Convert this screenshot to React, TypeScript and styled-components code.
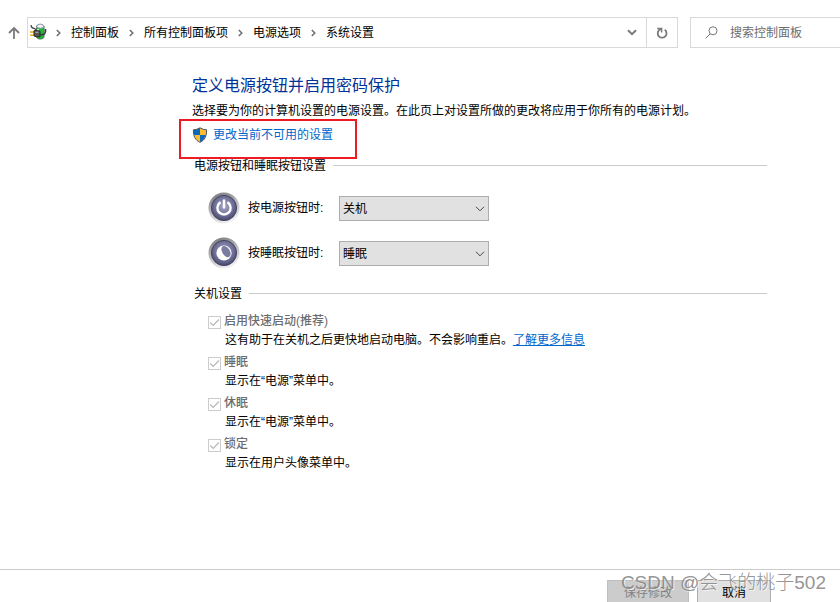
import React from "react";
import styled, { createGlobalStyle } from "styled-components";

const GlobalStyle = createGlobalStyle`
  * { box-sizing: border-box; }
  body {
    margin: 0;
    background: #fff;
    color: #000;
    font-family: "Liberation Sans", "Noto Sans CJK SC", sans-serif;
    font-size: 12px;
    line-height: 18px;
  }
  button, input, select { font: inherit; }
`;

const Page = styled.div`
  position: relative;
  display: flex;
  flex-direction: column;
  height: 100vh;
  overflow: hidden;
`;

const TopBar = styled.header`
  display: flex;
  align-items: stretch;
  height: 31px;
  margin-top: 17px;
`;

const PlainButton = styled.button`
  display: flex;
  align-items: center;
  justify-content: center;
  padding: 0;
  border: 0;
  background: none;
  color: #7a7a7a;
`;

const UpButton = styled(PlainButton)`
  width: 27px;
`;

const AddressBar = styled.div`
  display: flex;
  flex: 1;
  border: 1px solid #d9d9d9;
`;

const Crumbs = styled.nav`
  display: flex;
  flex: 1;
  align-items: center;
  padding-left: 1px;
  white-space: nowrap;
`;

const Crumb = styled.a`
  color: #000;
  text-decoration: none;
`;

const CrumbArrow = styled.svg`
  width: 5px;
  height: 8px;
  margin: 0 10px;
  &:first-of-type { margin-left: 8px; }
`;

const HistoryButton = styled(PlainButton)`
  width: 28px;
`;

const RefreshButton = styled(PlainButton)`
  width: 31px;
  border-left: 1px solid #d9d9d9;
`;

const SearchBox = styled.label`
  display: flex;
  align-items: center;
  gap: 12px;
  width: 150px;
  margin-left: 12px;
  padding-left: 14px;
  border: 1px solid #d9d9d9;
  border-right: 0;
`;

const SearchInput = styled.input`
  flex: 1;
  min-width: 0;
  padding: 0;
  border: 0;
  outline: 0;
  background: none;
  color: #6d6d6d;
  &::placeholder { color: #6d6d6d; opacity: 1; }
`;

const Content = styled.main`
  flex: 1;
  min-height: 0;
  padding: 28px 73px 0 192px;
`;

const Title = styled.h1`
  margin: 0;
  color: #003399;
  font-size: 16px;
  font-weight: 400;
  line-height: 20px;
`;

const Intro = styled.p`
  margin: 6px 0;
`;

const AdminRow = styled.div`
  position: relative;
  display: flex;
  align-items: center;
  gap: 5px;
  width: max-content;
  height: 18px;
`;

const Highlight = styled.span`
  position: absolute;
  inset: -7px -24px -15px -13px;
  border: 2px solid #ed1c24;
  pointer-events: none;
`;

const Link = styled.a`
  color: #0066cc;
  text-decoration: ${(p: { $underlined?: boolean }) => (p.$underlined ? "underline" : "none")};
`;

const Section = styled.section`
  margin-top: ${(p: { $gap: number }) => p.$gap}px;
`;

const SectionTitle = styled.h2`
  display: flex;
  align-items: center;
  gap: 7px;
  margin: 0;
  padding-left: 2px;
  font-size: 12px;
  font-weight: 400;
  &::after {
    content: "";
    flex: 1;
    margin-bottom: 2px;
    border-top: 1px solid #cacaca;
  }
`;

const ActionRows = styled.div`
  display: grid;
  gap: 13px;
  padding: 17px 0 0 16px;
`;

const ActionRow = styled.div`
  display: grid;
  grid-template-columns: 32px 83px 150px;
  align-items: center;
  column-gap: 8px;
  height: 32px;
`;

const SelectFrame = styled.div`
  position: relative;
  height: 25px;
`;

const Select = styled.select`
  appearance: none;
  width: 100%;
  height: 100%;
  padding: 1px 24px 0 3px;
  border: 1px solid #adadad;
  border-radius: 0;
  background: #e1e1e1;
  color: #000;
`;

const SelectArrow = styled.svg`
  position: absolute;
  top: 10px;
  right: 4px;
  width: 10px;
  height: 6px;
  pointer-events: none;
`;

const Options = styled.ul`
  display: grid;
  gap: 4px;
  margin: 0;
  padding: 9px 0 0 16px;
  list-style: none;
`;

const OptionLabel = styled.label`
  display: flex;
  align-items: center;
  gap: 3px;
  color: #6d6d6d;
  font-weight: 500;
`;

const CheckBox = styled.input`
  appearance: none;
  width: 13px;
  height: 13px;
  margin: 2px 0 0;
  border: 1px solid #cccccc;
  background: #fff;
  &:checked {
    background: url("data:image/svg+xml,%3Csvg xmlns='http://www.w3.org/2000/svg' viewBox='0 0 11 11'%3E%3Cpath d='M1.2 5.5 4.2 8.4 9.9 2.5' fill='none' stroke='%23b8b8b8' stroke-width='1.3'/%3E%3C/svg%3E");
  }
`;

const OptionText = styled.p`
  margin: 1px 0 0 17px;
`;

const Footer = styled.footer`
  display: flex;
  flex: none;
  justify-content: flex-end;
  align-items: flex-start;
  gap: 8px;
  height: 33px;
  padding: 10px 69px 0 0;
  border-top: 1px solid #cacaca;
`;

const FooterButton = styled.button`
  flex: none;
  width: ${(p: { $width: number }) => p.$width}px;
  height: 25px;
  padding: 0;
  border: 1px solid #adadad;
  background: #e1e1e1;
  color: #000;
  &:disabled {
    border-color: #bfbfbf;
    background: #cccccc;
    color: #838383;
  }
`;

const Watermark = styled.div`
  position: absolute;
  right: 14px;
  bottom: 6px;
  color: rgba(135, 135, 135, 0.9);
  font-family: "Liberation Sans", "Noto Sans CJK SC", sans-serif;
  font-size: 19px;
  font-weight: 300;
  line-height: 26px;
  text-shadow: 1px 1px 0 rgba(255, 255, 255, 0.7);
  white-space: nowrap;
  pointer-events: none;
`;

const PowerPlanIcon = () => (
  <svg width="18" height="18" viewBox="0 0 18 18" aria-hidden="true">
    <path d="M7.5 3v11.5q3.5 3.2 7.5 0V3z" fill="#1fb83a" stroke="#4a7a52" />
    <path d="M9 6v4" stroke="#a9f7ab" strokeWidth="2" />
    <path d="M7.5 4.5q0-3.3 3.7-3.5 3.8.2 3.8 3.5-3.6 1.6-7.5 0z" fill="#f0f4f8" stroke="#8b93a8" />
    <path d="M2 2.2q.4 3 3 3.2 2 .3 2.2 2.4" stroke="#444" strokeWidth="1.3" fill="none" />
    <path d="M1 9h4M1 12.3h4" stroke="#e8ad0c" strokeWidth="1.6" />
    <path d="M5 7.6h2.5l3.5.5v5.8l-3.5-.2L5 13z" fill="#555" stroke="#2b2b2b" />
    <path d="M6.5 9.3h3" stroke="#b9b9b9" />
    <path d="M11 11.5c4.5.8 6-1 5.5-5.5" stroke="#383838" strokeWidth="1.6" fill="none" />
  </svg>
);

const ShieldIcon = () => (
  <svg width="16" height="16" viewBox="0 0 16 16" aria-hidden="true">
    <defs>
      <clipPath id="shield">
        <path d="M8 1Q11 3 14.4 3C14.4 9 12.5 13 8 15 3.5 13 1.6 9 1.6 3Q5 3 8 1z" />
      </clipPath>
    </defs>
    <g clipPath="url(#shield)">
      <path d="M0 0h8v8H0zM8 8h8v8H8z" fill="#0b68bd" />
      <path d="M8 0h8v8H8zM0 8h8v8H0z" fill="#fdbd2c" />
    </g>
    <path d="M8 .8Q11 2.8 14.6 2.8C14.6 9 13 13.2 8 15.3 3 13.2 1.4 9 1.4 2.8Q5 2.8 8 .8z" fill="none" stroke="#4b4f55" />
  </svg>
);

const RoundIcon = ({ kind }: { kind: "power" | "sleep" }) => (
  <svg width="32" height="32" viewBox="0 0 32 32" aria-hidden="true">
    <defs>
      <linearGradient id={`${kind}-rim`} x1="0.2" y1="0" x2="0.6" y2="1">
        <stop offset="0" stopColor="#77777a" />
        <stop offset="0.5" stopColor="#bcbcc0" />
        <stop offset="1" stopColor="#f2f2f5" />
      </linearGradient>
      <radialGradient id={`${kind}-face`} cx="0.5" cy="0.42" r="0.6">
        <stop offset="0" stopColor="#a9a9c6" />
        <stop offset="0.6" stopColor="#70709a" />
        <stop offset="1" stopColor="#46466a" />
      </radialGradient>
    </defs>
    <circle cx="16" cy="16" r="15.5" fill={`url(#${kind}-rim)`} />
    <circle cx="16" cy="16" r="12.6" fill={`url(#${kind}-face)`} stroke="#45455f" />
    {kind === "power" ? (
      <g fill="none" stroke="#fff" strokeWidth="2.4" strokeLinecap="round">
        <path d="M11.8 10.8a6.6 6.6 0 1 0 8.4 0" />
        <path d="M16 8.4v7" />
      </g>
    ) : (
      <g>
        <circle cx="16" cy="16" r="7.6" fill="#fff" />
        <ellipse cx="18" cy="14.6" rx="3.8" ry="6.2" transform="rotate(-32 18 14.6)" fill="#7c7ca0" />
      </g>
    )}
  </svg>
);

const crumbs = ["控制面板", "所有控制面板项", "电源选项", "系统设置"];

const actions: { id: "power" | "sleep"; label: string; value: string }[] = [
  { id: "power", label: "按电源按钮时:", value: "关机" },
  { id: "sleep", label: "按睡眠按钮时:", value: "睡眠" },
];

const options = [
  { id: "fast", label: "启用快速启动(推荐)", text: "这有助于在关机之后更快地启动电脑。不会影响重启。", more: "了解更多信息" },
  { id: "standby", label: "睡眠", text: "显示在“电源”菜单中。" },
  { id: "hibernate", label: "休眠", text: "显示在“电源”菜单中。" },
  { id: "lock", label: "锁定", text: "显示在用户头像菜单中。" },
];

export default function App() {
  return (
    <Page>
      <GlobalStyle />
      <TopBar>
        <UpButton aria-label="向上">
          <svg width="12" height="14" viewBox="0 0 12 14" fill="none" stroke="currentColor" strokeWidth="1.8">
            <path d="M6 13V2M1 7l5-5 5 5" />
          </svg>
        </UpButton>
        <AddressBar>
          <PowerPlanCell>
            <PowerPlanIcon />
          </PowerPlanCell>
          <Crumbs>
            {crumbs.map((name) => (
              <React.Fragment key={name}>
                <CrumbArrow viewBox="0 0 5 8" fill="none" stroke="#6e6e6e" strokeWidth="1.5" aria-hidden="true">
                  <path d="M.8 1 3.8 4 .8 7" />
                </CrumbArrow>
                <Crumb href="#">{name}</Crumb>
              </React.Fragment>
            ))}
          </Crumbs>
          <HistoryButton aria-label="以前的位置">
            <svg width="10" height="7" viewBox="0 0 10 7" fill="none" stroke="currentColor" strokeWidth="2">
              <path d="M1 1.2l4 4 4-4" />
            </svg>
          </HistoryButton>
          <RefreshButton aria-label="刷新">
            <svg width="12" height="12" viewBox="0 0 12 12" fill="none" stroke="currentColor" strokeWidth="1.8">
              <path d="M8.8 2.8A4.4 4.4 0 1 1 3 3.2L4.8 2" />
              <path d="M1.2 1.4h4.4v4.2" strokeWidth="1.5" />
            </svg>
          </RefreshButton>
        </AddressBar>
        <SearchBox>
          <svg width="13" height="13" viewBox="0 0 13 13" fill="none" stroke="#777" strokeWidth="1" aria-hidden="true">
            <circle cx="8" cy="4.8" r="4" />
            <path d="M5.2 7.8.6 12.4" />
          </svg>
          <SearchInput type="search" placeholder="搜索控制面板" aria-label="搜索控制面板" />
        </SearchBox>
      </TopBar>

      <Content>
        <Title>定义电源按钮并启用密码保护</Title>
        <Intro>选择要为你的计算机设置的电源设置。在此页上对设置所做的更改将应用于你所有的电源计划。</Intro>
        <AdminRow>
          <ShieldIcon />
          <Link href="#">更改当前不可用的设置</Link>
          <Highlight />
        </AdminRow>

        <Section $gap={13}>
          <SectionTitle>电源按钮和睡眠按钮设置</SectionTitle>
          <ActionRows>
            {actions.map((a) => (
              <ActionRow key={a.id}>
                <RoundIcon kind={a.id} />
                <label htmlFor={a.id}>{a.label}</label>
                <SelectFrame>
                  <Select id={a.id} defaultValue={a.value}>
                    <option>{a.value}</option>
                  </Select>
                  <SelectArrow viewBox="0 0 10 6" fill="none" stroke="#444" aria-hidden="true">
                    <path d="M1 .8l4 4 4-4" />
                  </SelectArrow>
                </SelectFrame>
              </ActionRow>
            ))}
          </ActionRows>
        </Section>

        <Section $gap={16}>
          <SectionTitle>关机设置</SectionTitle>
          <Options>
            {options.map((o) => (
              <li key={o.id}>
                <OptionLabel>
                  <CheckBox type="checkbox" defaultChecked disabled />
                  {o.label}
                </OptionLabel>
                <OptionText>
                  {o.text}
                  {o.more && <Link href="#" $underlined>{o.more}</Link>}
                </OptionText>
              </li>
            ))}
          </Options>
        </Section>
      </Content>

      <Footer>
        <FooterButton $width={82} disabled>保存修改</FooterButton>
        <FooterButton $width={74}>取消</FooterButton>
      </Footer>
      <Watermark>CSDN @会飞的桃子502</Watermark>
    </Page>
  );
}

const PowerPlanCell = styled.span`
  display: flex;
  flex: none;
  align-items: center;
  padding-left: 1px;
  margin-bottom: 2px;
`;
